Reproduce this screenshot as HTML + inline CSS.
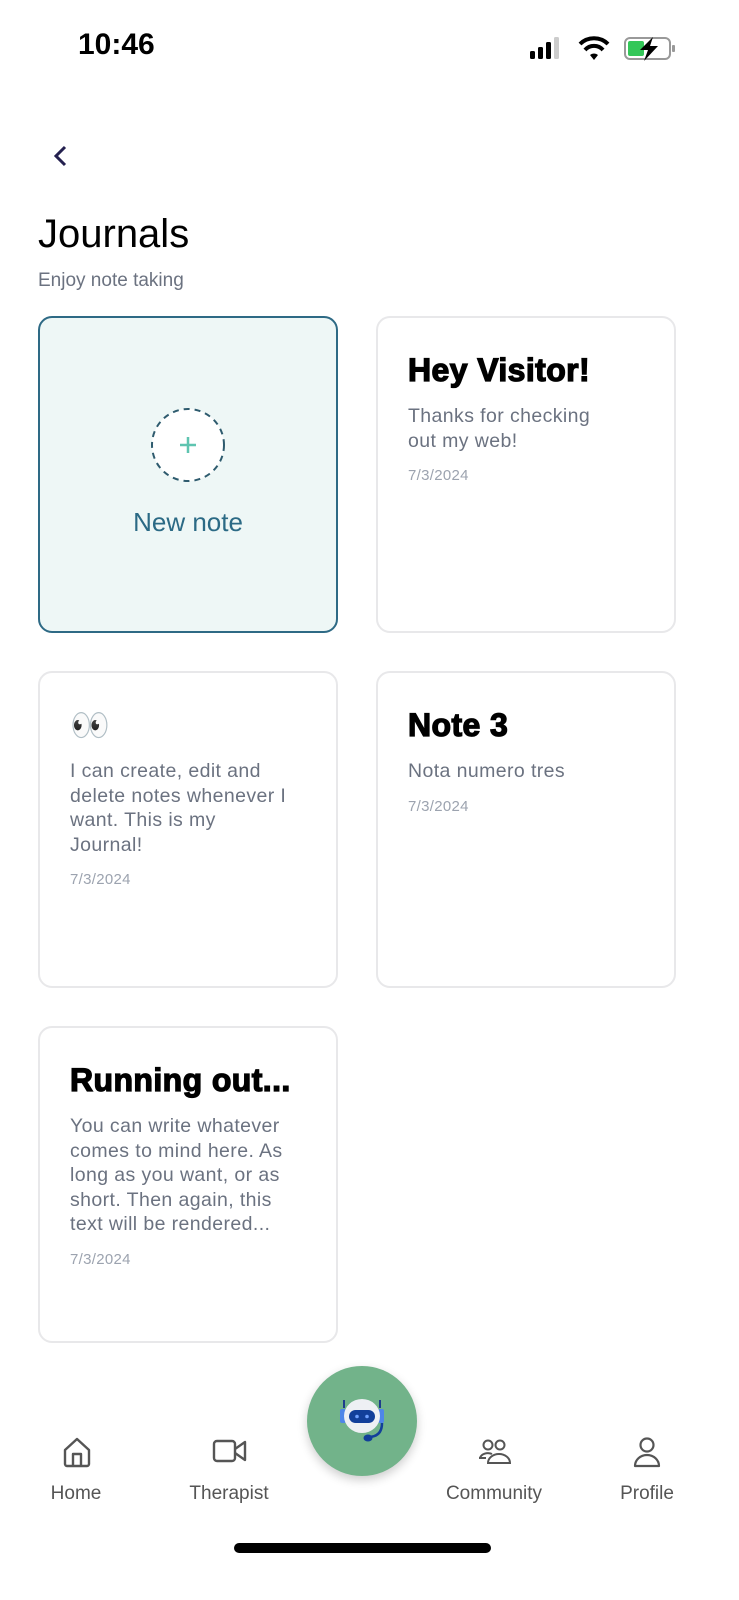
<!DOCTYPE html>
<html><head><meta charset="utf-8"><style>
*{margin:0;padding:0;box-sizing:border-box}
body{width:739px;height:1600px;background:#fff;font-family:"Liberation Sans",sans-serif;position:relative;overflow:hidden}
.abs{position:absolute}
.card{position:absolute;width:300px;height:317px;border:2px solid #e8e8ea;border-radius:14px;background:#fff;padding:30px 30px}
.card h2{font-size:32px;font-weight:bold;color:#000;-webkit-text-stroke:1.3px #000;letter-spacing:0.4px;margin-top:4px;margin-bottom:16px;line-height:36px;white-space:nowrap}
.card p{font-size:19.5px;color:#6b7280;line-height:24.5px;letter-spacing:0.4px;max-width:222px}
.card .d{font-size:15px;color:#9ca3af;margin-top:14px;letter-spacing:0.3px}
.nav{position:absolute;top:1483px;font-size:19px;color:#555;text-align:center;width:120px}
</style></head><body>
<div class="abs" style="left:78px;top:28px;font-size:30px;font-weight:bold;color:#000">10:46</div>
<svg class="abs" style="left:528px;top:36px" width="150" height="26">
<rect x="2" y="15" width="5" height="8" rx="1.5" fill="#000"/><rect x="10" y="11" width="5" height="12" rx="1.5" fill="#000"/><rect x="18" y="6" width="5" height="17" rx="1.5" fill="#000"/><rect x="26" y="1" width="5" height="22" rx="1.5" fill="#ccc"/>
<path d="M52 8 a20 20 0 0 1 28 0" stroke="#000" stroke-width="4" fill="none"/><path d="M57 14 a12 12 0 0 1 18 0" stroke="#000" stroke-width="4" fill="none"/><path d="M62 19 l4 5 l4-5 a6 6 0 0 0-8 0z" fill="#000"/>
<rect x="97" y="2" width="45" height="21" rx="5" fill="none" stroke="#999" stroke-width="2"/><rect x="100" y="5" width="16" height="15" rx="2" fill="#34c759"/><rect x="144" y="9" width="3" height="7" rx="1" fill="#999"/>
<path d="M125 1 L112 14 H120 L116 25 L130 10 H122 Z" fill="#000"/>
</svg>
<svg class="abs" style="left:50px;top:144px" width="20" height="24"><path d="M15 3 L6 12 L15 21" stroke="#24204f" stroke-width="3" fill="none"/></svg>
<div class="abs" style="left:38px;top:212px;font-size:40px;color:#000">Journals</div>
<div class="abs" style="left:38px;top:270px;font-size:19px;color:#6b7280">Enjoy note taking</div>

<div class="card" style="left:38px;top:316px;background:#eef7f6;border-color:#2e6a85"></div>
<svg class="abs" style="left:150px;top:408px" width="76" height="76"><circle cx="38" cy="37" r="36" fill="#fff" stroke="#2e5b6e" stroke-width="2" stroke-dasharray="6 5"/><path d="M38 29v16M30 37h16" stroke="#5ec4b0" stroke-width="2.5"/></svg>
<div class="abs" style="left:38px;top:507px;width:300px;text-align:center;font-size:26px;color:#2b6a85">New note</div>

<div class="card" style="left:376px;top:316px"><h2>Hey Visitor!</h2><p>Thanks for checking<br>out my web!</p><div class="d">7/3/2024</div></div>
<div class="card" style="left:38px;top:671px"><h2 style="-webkit-text-stroke:0;font-weight:normal">👀</h2><p>I can create, edit and delete notes whenever I want. This is my Journal!</p><div class="d">7/3/2024</div></div>
<div class="card" style="left:376px;top:671px"><h2>Note 3</h2><p>Nota numero tres</p><div class="d">7/3/2024</div></div>
<div class="card" style="left:38px;top:1026px"><h2>Running out...</h2><p>You can write whatever comes to mind here. As long as you want, or as short. Then again, this text will be rendered...</p><div class="d">7/3/2024</div></div>

<div class="abs" style="left:307px;top:1366px;width:110px;height:110px;border-radius:50%;background:#72b38a;box-shadow:0 4px 10px rgba(0,0,0,.2)"></div>
<svg class="abs" style="left:332px;top:1392px" width="60" height="60">
<rect x="8" y="17" width="6" height="14" rx="2" fill="#4f86e8"/><rect x="46" y="17" width="6" height="14" rx="2" fill="#4f86e8"/>
<path d="M12 8v8M48 8v8" stroke="#1e3c8c" stroke-width="2"/>
<ellipse cx="30" cy="24" rx="18" ry="17" fill="#eef0f4"/>
<rect x="17" y="18" width="26" height="13" rx="6.5" fill="#123f9a"/>
<circle cx="25" cy="24.5" r="1.8" fill="#6fa0ff"/><circle cx="35" cy="24.5" r="1.8" fill="#6fa0ff"/>
<path d="M50 31 q0 14-14 14" stroke="#123f9a" stroke-width="2.5" fill="none"/><ellipse cx="36" cy="46" rx="4.5" ry="3.5" fill="#123f9a"/>
</svg>

<svg class="abs" style="left:62px;top:1436px" width="30" height="32"><path d="M3 14 L15 3 L27 14 V28 a2 2 0 0 1-2 2 H5 a2 2 0 0 1-2-2Z M11 30 V18 H19 V30" stroke="#555" stroke-width="2.4" fill="none" stroke-linejoin="round"/></svg>
<svg class="abs" style="left:212px;top:1438px" width="36" height="26"><rect x="2" y="3" width="21" height="20" rx="3" stroke="#555" stroke-width="2.4" fill="none"/><path d="M23 11 L33 4 V22 L23 15" stroke="#555" stroke-width="2.4" fill="none" stroke-linejoin="round"/></svg>
<svg class="abs" style="left:476px;top:1438px" width="36" height="28"><circle cx="12" cy="7" r="4.5" stroke="#555" stroke-width="2" fill="none"/><circle cx="24" cy="7" r="4.5" stroke="#555" stroke-width="2" fill="none"/><path d="M4 20 a8 6 0 0 1 12-4 M12 25 a11 9 0 0 1 22 0 Z" stroke="#555" stroke-width="2" fill="none"/><path d="M3 20 H10" stroke="#555" stroke-width="2"/></svg>
<svg class="abs" style="left:632px;top:1436px" width="30" height="32"><circle cx="15" cy="9" r="6.5" stroke="#555" stroke-width="2.2" fill="none"/><path d="M3 30 a12 11 0 0 1 24 0 Z" stroke="#555" stroke-width="2.2" fill="none" stroke-linejoin="round"/></svg>
<div class="nav" style="left:16px">Home</div>
<div class="nav" style="left:169px">Therapist</div>
<div class="nav" style="left:434px">Community</div>
<div class="nav" style="left:587px">Profile</div>
<div class="abs" style="left:234px;top:1543px;width:257px;height:10px;border-radius:5px;background:#000"></div>
</body></html>
